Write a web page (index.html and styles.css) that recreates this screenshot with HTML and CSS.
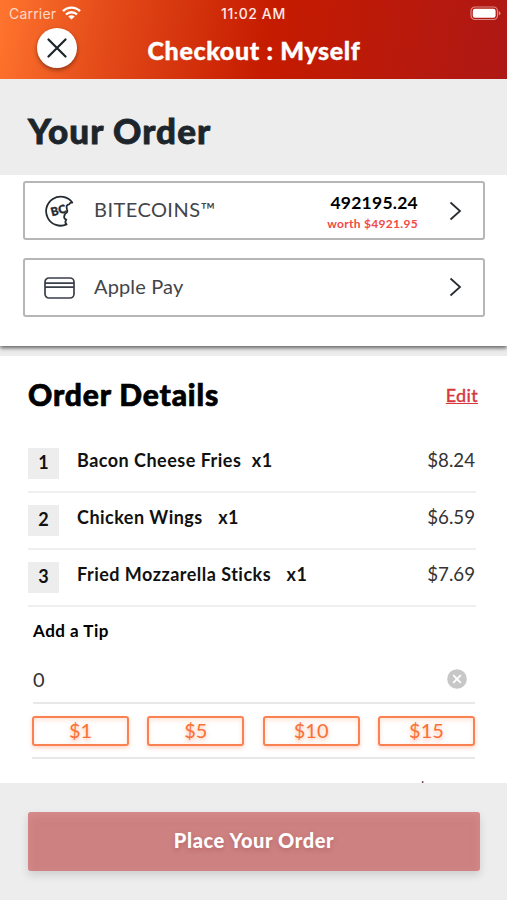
FILE: index.html
```html
<!DOCTYPE html>
<html lang="en">
<head>
<meta charset="utf-8">
<title>Checkout</title>
<link rel="stylesheet" href="styles.css">
</head>
<body>
<div class="app">
  <header class="header">
    <div class="status">
      <span class="carrier">Carrier</span>
      <svg class="wifi" width="19" height="14" viewBox="0 0 19 14"><g fill="none" stroke="#fff" stroke-width="2.4"><path d="M1 5.2a12 12 0 0 1 17 0"/><path d="M4 8.5a7.8 7.8 0 0 1 11 0"/></g><path d="M9.500 13.500 6.300 10.500a4.500 4.500 0 0 1 6.400 0z" fill="#fff"/></svg>
      <span class="time">11:02 AM</span>
      <svg class="battery" width="31" height="15" viewBox="0 0 31 15"><rect x="1" y="1" width="26.500" height="12.500" rx="4" fill="none" stroke="#fff" stroke-opacity=".5" stroke-width="1.200"/><rect x="2.800" y="2.800" width="22.800" height="9" rx="2.200" fill="#fff"/><path d="M28.800 5v4.600q1.700-.8 1.700-2.300t-1.700-2.300z" fill="#fff" fill-opacity=".5"/></svg>
    </div>
    <div class="nav">
      <button class="close" aria-label="Close"><svg width="20" height="20" viewBox="0 0 20 20"><path d="M1.500 1.500 18.500 18.500M18.500 1.500 1.500 18.500" stroke="#1c2429" stroke-width="2.200" stroke-linecap="round"/></svg></button>
      <h1 class="nav-title">Checkout : Myself</h1>
    </div>
  </header>
  <div class="heading"><h2>Your Order</h2></div>
  <section class="payment">
    <div class="method">
      <svg class="method-icon" width="30" height="32" viewBox="0 0 30 32"><path d="M28.300 7.600A14.500 14.500 0 1 0 22.600 29.400Q20.300 27.500 22.300 24.700Q18.800 23.500 21 19Q24.200 17.800 23 14.500Q21.600 9.500 25.200 9.300Q26 7.200 28.300 7.600z" fill="none" stroke="#252b32" stroke-width="1.800" stroke-linejoin="round"/><text x="8" y="21.300" transform="rotate(-15 8 21)" class="coin-text">BC</text></svg>
      <span class="method-name coins">BITECOINS™</span>
      <span class="balance"><b>492195.24</b><small>worth $4921.95</small></span>
      <svg class="chevron" width="13" height="20" viewBox="0 0 13 20"><path d="M1.500 1.500 11 10 1.500 18.500" fill="none" stroke="#292d32" stroke-width="1.800"/></svg>
    </div>
    <div class="method">
      <svg class="method-icon" width="31" height="22" viewBox="0 0 31 22"><g fill="none" stroke="#3a3e49" stroke-width="1.700"><rect x="1" y="1" width="29" height="20" rx="4"/><path d="M1 6.200h29M1 10.200h29"/></g></svg>
      <span class="method-name pay">Apple Pay</span>
      <svg class="chevron" width="13" height="20" viewBox="0 0 13 20"><path d="M1.500 1.500 11 10 1.500 18.500" fill="none" stroke="#292d32" stroke-width="1.800"/></svg>
    </div>
  </section>
  <main class="details">
    <div class="details-head"><h2>Order Details</h2><a class="edit">Edit</a></div>
    <ul class="items">
      <li><span class="num">1</span><span class="name n1">Bacon Cheese Fries</span><span class="qty">x1</span><span class="price">$8.24</span></li>
      <li><span class="num">2</span><span class="name n2">Chicken Wings</span><span class="qty">x1</span><span class="price">$6.59</span></li>
      <li><span class="num">3</span><span class="name n3">Fried Mozzarella Sticks</span><span class="qty">x1</span><span class="price">$7.69</span></li>
    </ul>
    <section class="tip">
      <h3>Add a Tip</h3>
      <div class="tip-field"><span>0</span><svg width="20" height="20" viewBox="0 0 20 20"><circle cx="10" cy="10" r="9.800" fill="#c7c7c7"/><path d="M6.200 6.200l7.600 7.600M13.800 6.200l-7.600 7.600" stroke="#fff" stroke-width="1.900"/></svg></div>
      <div class="tips"><button>$1</button><button>$5</button><button>$10</button><button>$15</button></div>
      <div class="subtotal"><span>Sub Total</span><span>$22.52</span></div>
    </section>
  </main>
  <footer class="footer"><button class="place">Place Your Order</button></footer>
</div>
</body>
</html>
```
FILE: styles.css
```css
* { box-sizing: border-box; margin: 0; padding: 0; }
body { background: #fff; font-family: Lato, "Liberation Sans", sans-serif; color: #111; font-variant-ligatures: none; }
button { font-family: inherit; border: 0; }
svg { display: block; flex: none; }
.app { width: 507px; height: 900px; overflow: hidden; display: flex; flex-direction: column; }
.header { height: 79px; flex: none; background: linear-gradient(100deg, #ff752e 0%, #e54d1a 20%, #c51b00 53%, #ae1815 100%); color: #fff; }
.status { height: 28px; display: grid; grid-template-columns: 62px 150px 70px 1fr 31px; padding: 0 6px 0 9px; align-items: center; font: 14px/28px Inter, sans-serif; }
.carrier { color: #ffd9c6; letter-spacing: .2px; }
.wifi { margin-left: -9px; margin-top: -2px; }
.time { font-weight: 500; font-size: 14px; letter-spacing: .6px; white-space: nowrap; color: #ffeae5; }
.battery { grid-column: 5; margin-top: -2px; }
.nav { display: grid; grid-template-columns: 40px 1fr 40px; padding: 0 36px 0 37px; height: 51px; }
.close { width: 40px; height: 40px; border-radius: 50%; background: #fff; display: grid; place-items: center; box-shadow: 0 2px 4px #0006; }
.nav-title { text-align: center; font-size: 25px; line-height: 45px; font-weight: 900; white-space: nowrap; letter-spacing: .65px; -webkit-text-stroke: .4px; }
.heading { height: 96px; flex: none; background: #ededed; padding-left: 28px; }
.heading h2 { font-size: 35px; line-height: 102px; font-weight: 900; color: #1c252b; letter-spacing: 1.050px; -webkit-text-stroke: .8px; }
.payment { height: 171px; flex: none; position: relative; z-index: 1; background: #fff; padding: 6px 22px 0 23px; display: flex; flex-direction: column; gap: 18px; box-shadow: 0 2px 4px #0009; clip-path: inset(0 0 -10px 0); }
.method { height: 59px; flex: none; border: 2px solid #b6b6b6; border-radius: 3px; display: flex; align-items: center; padding: 0 21px 0 19px; }
.method-icon { margin-right: 20px; }
.pay { margin-left: -1px; }
.coin-text { font: 900 11.500px Lato, sans-serif; fill: #252b32; stroke: #252b32; stroke-width: .4px; }
.method-name { font-size: 20px; line-height: 24px; color: #42454a; white-space: nowrap; padding-bottom: 3px; }
.coins { letter-spacing: .45px; padding-bottom: 4px; }
.pay { letter-spacing: .15px; }
.balance { margin-left: auto; margin-right: 31px; text-align: right; padding-top: 6px; }
.balance b { display: block; font-size: 17.500px; line-height: 20px; color: #000; letter-spacing: .25px; }
.balance small { display: block; font-size: 12px; line-height: 21px; font-weight: 700; color: #f24a45; white-space: nowrap; letter-spacing: .3px; }
.chevron { margin-left: auto; }
.pay + .chevron { margin-top: -2px; }
.balance + .chevron { margin-left: 0; }
.details { flex: none; height: 437px; overflow: hidden; border-top: 10px solid #ececec; padding: 0 31px 0 28px; }
.details-head { height: 80px; display: flex; justify-content: space-between; align-items: flex-start; }
.details-head h2 { font-size: 30px; line-height: 77px; font-weight: 900; color: #000; white-space: nowrap; letter-spacing: .85px; -webkit-text-stroke: .7px; }
.edit { margin-right: -2px; font-size: 18px; line-height: 79px; color: #d6383d; text-decoration: underline; font-weight: 500; letter-spacing: .3px; -webkit-text-stroke: .3px; }
.items { list-style: none; }
.items li { height: 57px; border-bottom: 2px solid #efefef; display: flex; align-items: flex-start; font-size: 18px; line-height: 48px; }
.num { width: 31px; height: 31px; line-height: 29px; margin: 12px 18px 0 0; background: #ededed; text-align: center; font-weight: 700; }
.name, .qty { font-weight: 700; white-space: nowrap; letter-spacing: .48px; }
.name { margin-right: 15.500px; }
.n1 { margin-right: 10.500px; }
.price { margin-left: auto; margin-right: 1px; color: #333; font-size: 18.700px; }
.tip { padding: 0 1px 0 5px; }
.tip h3 { height: 49px; line-height: 47px; font-size: 17px; font-weight: 700; color: #000; letter-spacing: .5px; }
.tip-field { height: 48px; border-bottom: 2px solid #e8e8e8; display: flex; align-items: center; justify-content: space-between; padding-right: 8px; font-size: 20px; color: #333; }
.tips { height: 55px; padding-top: 12px; display: grid; grid-template-columns: repeat(4, 97px); justify-content: space-between; border-bottom: 2px solid #e8e8e8; margin-left: -1px; }
.tips button { height: 30px; border: 2px solid #fa8152; border-radius: 3px; background: #fff; color: #fa7137; font-size: 20px; line-height: 24px; padding-bottom: 2px; box-shadow: 0 2px 4px #fa71374d, inset 0 2px 5px #fa713733; text-shadow: 0 2px 4px #fa713780; }
.subtotal { display: flex; justify-content: space-between; padding-top: 19px; font-size: 18.700px; line-height: 24px; }
.footer { flex: 1; background: #ededed; padding: 29px 27px 0 28px; position: relative; z-index: 2; }
.place { display: block; width: 100%; height: 59px; border-radius: 3px; background: #cd8180; color: #fff; font-size: 20px; font-weight: 900; letter-spacing: .6px; padding-bottom: 3px; box-shadow: 0 4px 9px #0002, inset 0 3px 10px #e0929599; text-shadow: 0 2px 4px #a7505a80; }
```
